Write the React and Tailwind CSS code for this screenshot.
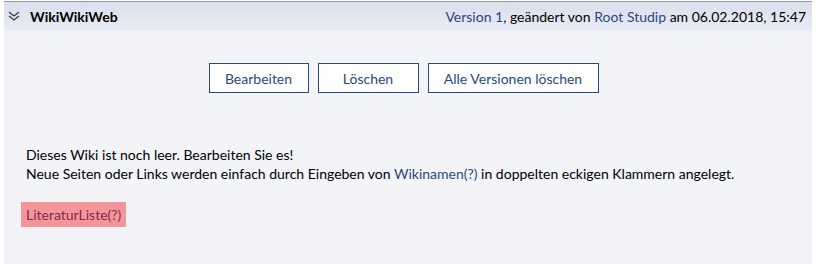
import React from "react";

export default function App() {
  return (
    <div className="w-[816px] h-[264px] bg-white px-[4px] pt-[1px] font-['Lato','Liberation_Sans',sans-serif] text-[14px] text-[#000]">
      <div className="h-[263px] flex flex-col bg-[#f3f4f8]">
        <div className="h-[30px] border-t border-[#8b9bb5] bg-gradient-to-b from-[#d9e0ec] to-[#e8ecf4] flex items-center justify-between pl-[4px] pr-[6px]">
          <div className="flex items-center gap-[10px]">
            <svg width="12" height="10" viewBox="0 0 12 10" fill="none" stroke="#333" strokeWidth="1.2" className="-mt-[1px]">
              <path d="M1 1 L6 5 L11 1" />
              <path d="M1 5 L6 9 L11 5" />
            </svg>
            <span className="font-bold text-[14px]">WikiWikiWeb</span>
          </div>
          <div className="text-[14px]">
            <span className="text-[#28497c]">Version 1</span>, geändert von{" "}
            <span className="text-[#28497c]">Root Studip</span> am 06.02.2018, 15:47
          </div>
        </div>
        <div className="flex justify-center gap-[9px] pt-[32px] pr-[9px]">
          <button className="h-[30px] w-[100px] border border-[#28497c] bg-white text-[#28497c] text-[14px]">Bearbeiten</button>
          <button className="h-[30px] w-[101px] border border-[#28497c] bg-white text-[#28497c] text-[14px]">Löschen</button>
          <button className="h-[30px] w-[171px] border border-[#28497c] bg-white text-[#28497c] text-[14px]">Alle Versionen löschen</button>
        </div>
        <div className="pl-[22px] pt-[52px] leading-[19px]">
          <p>Dieses Wiki ist noch leer. Bearbeiten Sie es!</p>
          <p>
            Neue Seiten oder Links werden einfach durch Eingeben von{" "}
            <span className="text-[#28497c]">Wikinamen(?)</span> in doppelten eckigen Klammern angelegt.
          </p>
          <div className="mt-[19px] -ml-[5px] inline-flex items-center h-[25px] px-[5px] bg-[#f4959b] text-[#7f2d4c]">LiteraturListe(?)</div>
        </div>
      </div>
    </div>
  );
}
